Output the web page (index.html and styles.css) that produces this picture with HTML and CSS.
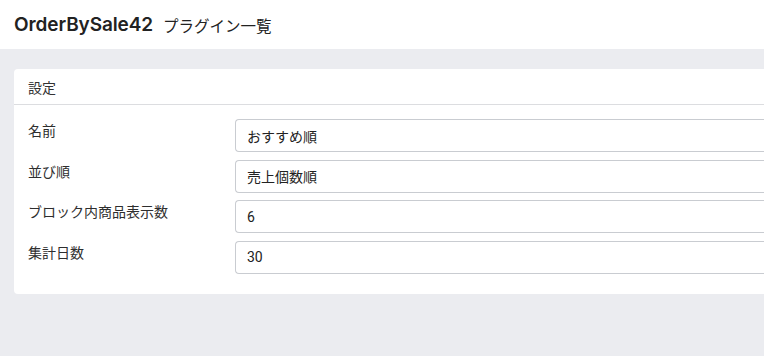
FILE: index.html
```html
<!DOCTYPE html>
<html lang="ja">
<head>
<meta charset="utf-8">
<title>OrderBySale42</title>
<link rel="stylesheet" href="styles.css">
</head>
<body>
<header class="topbar">
  <h1 class="title">OrderBySale42</h1>
  <span class="subtitle">プラグイン一覧</span>
</header>
<main class="content">
  <section class="card">
    <div class="card-header">設定</div>
    <div class="card-body">
      <div class="form-row">
        <label class="form-label">名前</label>
        <div class="form-control">おすすめ順</div>
      </div>
      <div class="form-row">
        <label class="form-label">並び順</label>
        <div class="form-control">売上個数順</div>
      </div>
      <div class="form-row">
        <label class="form-label">ブロック内商品表示数</label>
        <div class="form-control">6</div>
      </div>
      <div class="form-row">
        <label class="form-label">集計日数</label>
        <div class="form-control">30</div>
      </div>
    </div>
  </section>
</main>
</body>
</html>
```
FILE: styles.css
```css
html, body {
  margin: 0;
  padding: 0;
  overflow: hidden;
}
body {
  width: 764px;
  height: 356px;
  background: #ebecf0;
  font-family: "Roboto", "Noto Sans CJK JP", sans-serif;
  color: #2a2a2a;
  font-size: 14px;
}
.topbar {
  background: #ffffff;
  height: 49px;
  display: flex;
  align-items: center;
  padding: 0 14px;
  gap: 10px;
  box-sizing: border-box;
}
.title {
  margin: 0;
  font-family: "Inter", "Roboto", sans-serif;
  font-size: 19px;
  font-weight: 600;
  color: #222;
  letter-spacing: -0.1px;
}
.subtitle {
  font-size: 15.5px;
  color: #222;
  font-family: "Noto Sans CJK JP", sans-serif;
}
.content {
  padding: 20px 0 0 14px;
}
.card {
  background: #fff;
  border-radius: 4px 0 0 4px;
}
.card-header {
  height: 36px;
  box-sizing: border-box;
  display: flex;
  align-items: center;
  padding: 0 14px;
  border-bottom: 1px solid #dcdde0;
  font-family: "Noto Sans CJK JP", sans-serif;
  font-size: 14px;
  color: #333;
}
.card-body {
  padding: 14px 0 20px 14px;
  display: flex;
  flex-direction: column;
  gap: 7.67px;
}
.form-row {
  display: grid;
  grid-template-columns: 207px 1fr;
  align-items: start;
}
.form-label {
  font-family: "Noto Sans CJK JP", sans-serif;
  font-size: 14px;
  line-height: 20px;
  padding-top: 1px;
  color: #2e2e2e;
}
.form-control {
  height: 33px;
  box-sizing: border-box;
  border: 1px solid #c9ccd1;
  border-right: none;
  border-radius: 4px 0 0 4px;
  padding: 0 11px;
  display: flex;
  align-items: center;
  font-family: "Roboto", "Noto Sans CJK JP", sans-serif;
  font-size: 14px;
  color: #222;
}
```
